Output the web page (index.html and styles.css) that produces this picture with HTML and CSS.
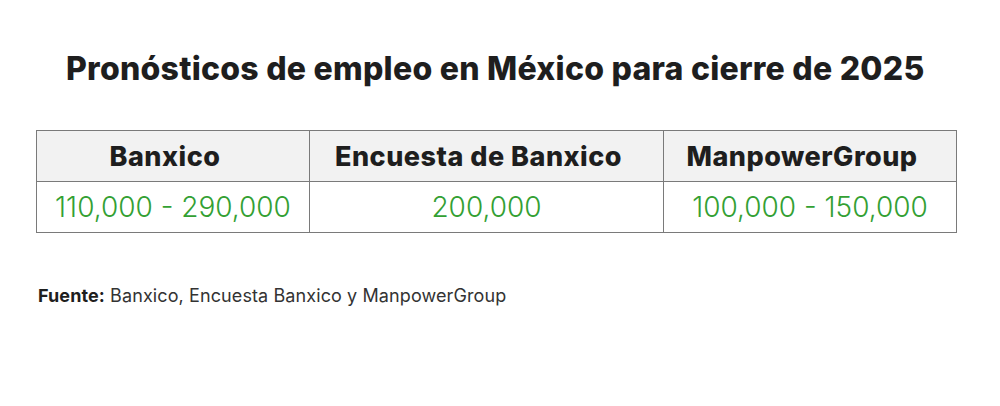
FILE: index.html
```html
<!DOCTYPE html>
<html lang="es">
<head>
<meta charset="utf-8">
<link rel="stylesheet" href="styles.css">
</head>
<body>
<div class="page">
  <h1 class="title">Pronósticos de empleo en México para cierre de 2025</h1>
  <table class="forecast">
    <thead>
      <tr>
        <th class="c1">Banxico</th>
        <th class="c2">Encuesta de Banxico</th>
        <th class="c3">ManpowerGroup</th>
      </tr>
    </thead>
    <tbody>
      <tr>
        <td>110,000 - 290,000</td>
        <td>200,000</td>
        <td>100,000 - 150,000</td>
      </tr>
    </tbody>
  </table>
  <p class="source"><strong>Fuente:</strong> Banxico, Encuesta Banxico y ManpowerGroup</p>
</div>
</body>
</html>
```
FILE: styles.css
```css
html, body {
  margin: 0;
  padding: 0;
  background: #ffffff;
}
.page {
  width: 1000px;
  height: 406px;
  padding: 50px 0 0 36px;
  box-sizing: border-box;
  font-family: "Inter", "Liberation Sans", sans-serif;
  color: #1e1e1e;
}
.title {
  margin: 0 0 0 30px;
  font-size: 32px;
  line-height: 38px;
  font-weight: 800;
  letter-spacing: 0.25px;
  white-space: nowrap;
}
.forecast {
  margin-top: 42px;
  width: 919px;
  border-collapse: collapse;
  table-layout: fixed;
}
.forecast th, .forecast td {
  border: 1px solid #7a7a7a;
  text-align: center;
  padding: 0;
}
.forecast th {
  height: 50px;
  padding-right: 16px;
  background: #f2f2f2;
  font-size: 27px;
  font-weight: 800;
  letter-spacing: 0.5px;
  color: #1e1e1e;
}
.forecast td {
  height: 50px;
  font-size: 28px;
  font-weight: 300;
  letter-spacing: 0;
  color: #33a033;
}
.c1 { width: 256px; }
.c2 { width: 337px; }
.c3 { width: 276px; }
.source {
  margin: 53px 0 0 2px;
  font-size: 18px;
  line-height: 20px;
  letter-spacing: 0.1px;
  color: #333333;
}
.source strong {
  font-weight: 700;
  color: #1e1e1e;
}
```
